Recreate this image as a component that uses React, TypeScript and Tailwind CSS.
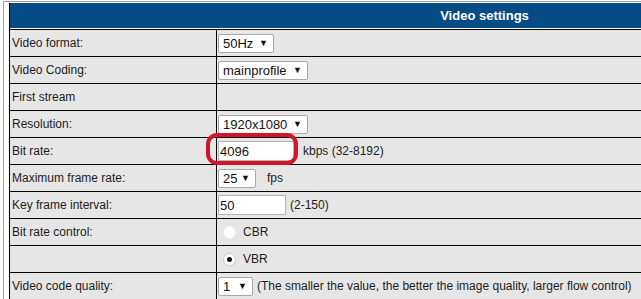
import React from "react";

const font = { fontFamily: '"Liberation Sans", Arial, sans-serif' };

function Select({ value, w }: { value: string; w: string }) {
  return (
    <div
      className={`${w} h-[19px] bg-white border border-[#a9a9a9] rounded-[2px] flex items-center justify-between pl-[4px] pr-[5px] text-[13px] text-[#111] leading-none`}
    >
      <span>{value}</span>
      <span className="text-[9px] text-[#111]">▼</span>
    </div>
  );
}

function Input({ value, w }: { value: string; w: string }) {
  return (
    <div
      className={`${w} h-[20px] bg-white border border-[#b5b5b5] flex items-center pl-[1px] text-[13px] text-[#111] leading-none`}
    >
      {value}
    </div>
  );
}

function Radio({ checked }: { checked?: boolean }) {
  return (
    <div
      className={`w-[13px] h-[13px] rounded-full bg-white flex items-center justify-center ${
        checked ? "border border-[#cfc8b8]" : "border border-[#f2f2f2]"
      }`}
    >
      {checked && <div className="w-[5px] h-[5px] rounded-full bg-[#111]" />}
    </div>
  );
}

function Row({ label, children }: { label?: string; children?: React.ReactNode }) {
  return (
    <div className="flex h-[27px] border-t border-black">
      <div className="w-[206px] bg-[#e6e6e6] flex items-center pl-[2px] text-[12px] text-[#1e1e1e]">
        {label}
      </div>
      <div className="flex-1 border-l border-black bg-[#e6e6e6] flex items-center pl-[1px] text-[12px] text-[#1e1e1e]">
        {children}
      </div>
    </div>
  );
}

export default function App() {
  return (
    <div className="relative w-[641px] h-[299px] overflow-hidden bg-white pt-[1px] pl-[3px]" style={font}>
      <div className="border-t border-l border-[#a0a0a0] pt-[1px] pl-[5px] w-[1000px]">
        <div className="w-[950px] border-l border-black bg-white">
          <div className="h-[25px] bg-[#054b85] flex items-center justify-center text-white font-bold text-[13px]">
            Video settings
          </div>
          <div className="h-[1px] bg-white" />
          <Row label="Video format:">
            <Select value="50Hz" w="w-[56px]" />
          </Row>
          <Row label="Video Coding:">
            <Select value="mainprofile" w="w-[90px]" />
          </Row>
          <Row label="First stream" />
          <Row label="Resolution:">
            <Select value="1920x1080" w="w-[90px]" />
          </Row>
          <Row label="Bit rate:">
            <Input value="4096" w="w-[76px]" />
            <span className="ml-[9px]">kbps (32-8192)</span>
          </Row>
          <Row label="Maximum frame rate:">
            <Select value="25" w="w-[38px]" />
            <span className="ml-[11px]">fps</span>
          </Row>
          <Row label="Key frame interval:">
            <Input value="50" w="w-[68px]" />
            <span className="ml-[4px]">(2-150)</span>
          </Row>
          <Row label="Bit rate control:">
            <div className="ml-[5px]">
              <Radio />
            </div>
            <span className="ml-[7px]">CBR</span>
          </Row>
          <Row>
            <div className="ml-[5px]">
              <Radio checked />
            </div>
            <span className="ml-[7px]">VBR</span>
          </Row>
          <Row label="Video code quality:">
            <Select value="1" w="w-[35px]" />
            <span className="ml-[4px]">(The smaller the value, the better the image quality, larger flow control)</span>
          </Row>
        </div>
      </div>
      <div className="absolute left-[206px] top-[133px] w-[92px] h-[32px] border-[4px] border-[#d3152b] rounded-[11px]" />
    </div>
  );
}
